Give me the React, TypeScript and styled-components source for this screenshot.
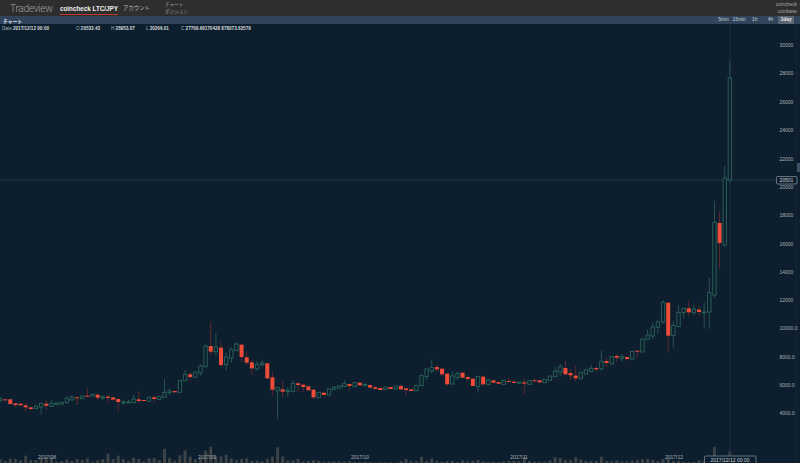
import React from 'react';
import styled, {createGlobalStyle} from 'styled-components';

type Candle = {top: number; bottom: number; high: number; low: number; up: boolean};
// [bodyTop, bodyBottom, wickTop?, wickBottom?] measured on a 3x crop
type Raw = [number, number, number?, number?];

const CANDLE_STEP = 5.14;
const BG = '#0d1f2e';
const FONT = '"Liberation Sans", "Noto Sans CJK JP", sans-serif';

// dirs: u = hollow green, d = filled red, one letter per row
const seg = (y0: number, dirs: string, rows: Raw[]): Candle[] =>
  rows.map((r, i) => ({
    top: y0 + r[0] / 3,
    bottom: y0 + r[1] / 3,
    high: y0 + (r[2] ?? r[0]) / 3,
    low: y0 + (r[3] ?? r[1]) / 3,
    up: dirs[i] === 'u',
  }));

const candles: Candle[] = [
  ...seg(380, 'uddddddu' + 'uduuuuud' + 'udududdd' + 'uuuddudu', [
    [55, 62, 50, 67], [58, 61], [58, 72], [70, 75, 70, 82], [71, 76], [76, 82, 68, 95], [82, 87, 82, 92], [80, 86, 72, 88],
    [70, 81, 70, 104], [71, 77, 60, 90], [70, 79, 60, 82], [69, 74], [67, 72], [56, 68, 48, 72], [51, 60, 45, 62], [52, 55, 52, 75],
    [48, 56], [47, 50, 25, 52], [43, 48], [44, 53, 44, 60], [51, 54, 45, 60], [50, 54, 45, 68], [52, 59, 52, 62], [57, 66, 57, 95],
    [66, 69, 60, 74], [66, 68, 60, 70], [57, 68, 45, 70], [58, 63, 35, 70], [60, 63], [52, 64], [52, 57, 45, 66], [49, 58],
  ]),
  ...seg(310, 'uuduuduu' + 'ududuuud' + 'dduuddud' + 'uudddduduu', [
    [247, 262, 207, 264], [243, 247, 235, 255], [243, 247], [211, 247, 210, 248], [193, 212, 180, 213], [193, 201, 185, 212], [186, 202], [168, 189, 163, 197],
    [108, 170, 104, 171], [108, 125, 36, 135], [111, 125, 70, 135], [113, 165, 97, 170], [141, 164, 127, 182], [119, 144, 112, 158], [102, 122, 96, 123], [104, 141, 104, 156],
    [142, 158, 124, 165], [157, 175, 148, 195], [163, 177, 153, 182], [159, 164, 148, 170], [160, 205, 160, 207], [202, 239, 186, 255], [232, 242, 232, 327], [238, 245, 212, 262],
    [241, 245, 233, 260], [220, 245, 212, 247], [220, 225, 215, 245], [224, 231, 222, 245], [229, 241], [239, 262, 239, 268], [247, 263], [248, 255], [237, 255], [232, 239, 228, 240],
  ]),
  ...seg(350, 'uudududd' + 'dududddu' + 'uuudddu' + 'u' + 'dddududd' + 'uddududd' + 'uuuudddu' + 'uudud', [
    [107, 114], [101, 110, 90, 111], [102, 108, 102, 122], [98, 110], [98, 106], [103, 107, 100, 108], [105, 113], [112, 117, 108, 117],
    [114, 120], [111, 119], [111, 117], [108, 117], [108, 118, 103, 120], [115, 120, 115, 137], [118, 123], [106, 122],
    [77, 107, 70, 108], [57, 80, 57, 90], [52, 63, 28, 70], [51, 58, 45, 65], [56, 73, 56, 78], [71, 103, 71, 108], [78, 102, 63, 102], [71, 82, 65, 90],
    [68, 83], [81, 87, 77, 94], [86, 108], [79, 110, 79, 128], [80, 103, 78, 108], [90, 104, 85, 105], [91, 98], [96, 101],
    [92, 103, 88, 104], [93, 96, 83, 97], [95, 99], [96, 100], [97, 101, 87, 133], [92, 103, 92, 106], [91, 94, 85, 94], [91, 97],
    [88, 98], [78, 91], [63, 80, 50, 81], [50, 66, 42, 80], [54, 73, 32, 75], [69, 76, 60, 90], [77, 85, 48, 95], [67, 85, 67, 90],
    [59, 72], [55, 65, 45, 66], [54, 58, 48, 65], [34, 56, 2, 63], [33, 39, 25, 52],
  ]),
  ...seg(280, 'udududuu' + 'uuuduuud' + 'uduu', [
    [230, 252], [228, 233, 222, 245], [230, 235, 222, 245], [231, 237, 231, 243], [214, 237], [212, 215, 212, 233], [177, 216], [165, 178, 148, 179],
    [141, 168, 127, 177], [126, 142, 118, 162], [68, 126, 60, 132], [68, 167, 68, 218], [137, 167, 122, 202], [97, 140, 77, 141], [85, 98, 85, 115], [85, 97, 63, 107],
    [87, 98, 75, 105], [89, 96, 77, 106], [96, 98, 67, 142], [38, 96, -6, 147],
  ]),
  {top: 222.3, bottom: 295, high: 201, low: 298, up: true},
  {top: 223, bottom: 243, high: 211.7, low: 269, up: false},
  {top: 178, bottom: 245, high: 166, low: 247, up: true},
  {top: 78, bottom: 180, high: 61, low: 183, up: true},
];

const volumes: number[] = [
  ...[238, 243, 236, 237, 241, 227, 240, 240, 235, 230, 233, 245, 243, 239, 243, 237, 240, 235, 245, 241, 237, 221, 237, 227, 237, 243, 233, 237, 244, 235, 234, 240, 207, 234, 242, 226, 211, 230, 238].map(t => (249 - t) / 3),
  ...[70, 47, 35, 65, 64, 59, 70, 75, 72, 70, 77, 77, 79, 71, 65, 37, 64, 77, 76, 72, 79, 78, 76, 78, 80, 79, 79, 79, 79].map(t => (84 - t) / 3),
  ...[333, 336, 336, 336, 337, 337, 336, 337, 337, 338, 333, 327, 334, 333, 320, 333, 325, 333, 335, 333, 333, 336, 331, 334, 333, 330, 334, 336, 335, 336, 334, 332, 333, 333, 322, 333, 335, 335, 335, 331, 322, 324, 330, 330, 322, 328, 333, 332, 333, 320, 333].map(t => (339 - t) / 3),
  ...[184, 181, 184, 184, 182, 180, 178, 177, 180, 183, 177, 176, 183, 183, 186, 186, 186, 181].map(t => (189 - t) / 3),
  2, 2, 16, 3, 3, 11.7,
];

const priceLabels: [string, number][] = [
  ['30000', 45], ['28000', 73.5], ['26000', 102], ['24000', 130.5], ['22000', 159], ['20000', 187], ['18000', 215.5],
  ['16000', 244], ['14000', 272], ['12000', 300.5], ['10000.0', 328.5], ['8000.0', 357], ['6000.0', 385.5], ['4000.0', 413.5],
];
const dateLabels: [string, number][] = [
  ['2017/08', 47], ['2017/09', 207], ['2017/10', 360], ['2017/11', 519], ['2017/12', 674],
];
const tabs = ['5min', '15min', '1h', '4h', '1day'];

const GlobalStyle = createGlobalStyle`
  html, body { margin: 0; padding: 0; background: ${BG}; }
  body { font-family: ${FONT}; overflow: hidden; }
`;

export default function App() {
  return (
    <Page>
      <GlobalStyle />
      <Header>
        <Logo>Tradeview</Logo>
        <NavActive>coincheck LTC/JPY</NavActive>
        <NavItem>アカウント</NavItem>
        <SubNav>
          <span>チャート</span>
          <span>ポジション</span>
        </SubNav>
        <Exchanges>
          <span>coincheck</span>
          <span>coinbase</span>
        </Exchanges>
      </Header>
      <Toolbar>
        <ToolbarTitle>チャート</ToolbarTitle>
        <Tabs>
          {tabs.map(t => (
            <Tab key={t} $active={t === '1day'}>
              {t}
            </Tab>
          ))}
        </Tabs>
      </Toolbar>
      <ChartArea>
        <Legend>
          <LegendDate>
            Date <b>2017/12/12 00:00</b>
          </LegendDate>
          <LegendValue $w={35}>
            O <b>20533.43</b>
          </LegendValue>
          <LegendValue $w={35}>
            H <b>28953.07</b>
          </LegendValue>
          <LegendValue $w={35}>
            L <b>20266.01</b>
          </LegendValue>
          <LegendValue $w={120}>
            C <b>27709.66170428 878073.63579</b>
          </LegendValue>
        </Legend>
        <Chart viewBox="0 24 800 439" width={800} height={439}>
          {volumes.map((h, i) => (
            <rect key={i} x={i * CANDLE_STEP - 1.5} y={463 - h} width={3} height={h} fill="#3c4245" />
          ))}
          <line x1={730} y1={24} x2={730} y2={456} stroke="#1d3140" />
          <line x1={0} y1={180} x2={776} y2={180} stroke="#1f3a42" />
          <line x1={796.5} y1={24} x2={796.5} y2={463} stroke="#12242f" />
          <rect x={797} y={163} width={3} height={9} fill="#3d5066" />
          {candles.map((c, i) => {
            const x = i * CANDLE_STEP;
            return (
              <g key={i}>
                <line x1={x} y1={c.high} x2={x} y2={c.low} stroke={c.up ? '#27544f' : '#5e2a2e'} />
                {c.up ? (
                  <rect x={x - 1.7} y={c.top} width={3.4} height={Math.max(c.bottom - c.top, 0.8)} fill={BG} stroke="#2a6459" strokeWidth={0.9} />
                ) : (
                  <rect x={x - 2} y={c.top} width={4} height={Math.max(c.bottom - c.top, 1)} fill="#ee4b38" />
                )}
              </g>
            );
          })}
          {priceLabels.map(([t, y]) => (
            <AxisText key={t} x={779.5} y={y + 1.8}>
              {t}
            </AxisText>
          ))}
          {dateLabels.map(([t, x]) => (
            <AxisText key={t} x={x} y={459} textAnchor="middle">
              {t}
            </AxisText>
          ))}
          <rect x={776.5} y={176.5} width={20.5} height={7.5} rx={1} fill={BG} stroke="#8b959c" strokeWidth={0.7} />
          <TagText x={779.5} y={182.2}>20501</TagText>
          <rect x={704.5} y={456} width={51.5} height={8} rx={1} fill={BG} stroke="#8b959c" strokeWidth={0.7} />
          <TagText x={730} y={461.5} textAnchor="middle">
            2017/12/12 00:00
          </TagText>
        </Chart>
      </ChartArea>
    </Page>
  );
}

const Page = styled.div`
  display: flex;
  flex-direction: column;
  width: 800px;
  height: 463px;
  overflow: hidden;
  background: ${BG};
`;

const Header = styled.header`
  display: flex;
  align-items: center;
  flex: 0 0 16px;
  padding: 0 3px 0 10px;
  background: #2e2e2e;
  color: #b5b5b5;
`;

const Logo = styled.div`
  width: 50px;
  font-family: Roboto, ${FONT};
  font-size: 10.2px;
  font-weight: 300;
  letter-spacing: -0.3px;
  color: #a0a0a0;
`;

const NavActive = styled.div`
  padding-bottom: 1px;
  margin-top: 2px;
  border-bottom: 1px solid #c0392b;
  font-size: 6.3px;
  font-weight: 700;
  line-height: 9px;
  color: #f2f2f2;
  white-space: nowrap;
`;

const NavItem = styled.div`
  margin-left: 5px;
  font-size: 5.4px;
  color: #b9b9b9;
  white-space: nowrap;
`;

const SubNav = styled.div`
  display: flex;
  flex-direction: column;
  gap: 2px;
  margin-left: 15px;
  font-size: 4.6px;
  line-height: 5px;
  color: #a5a5a5;
`;

const Exchanges = styled.div`
  display: flex;
  flex-direction: column;
  align-items: flex-end;
  gap: 2.5px;
  margin-left: auto;
  font-size: 4.8px;
  line-height: 5px;
  color: #a8a8a8;
`;

const Toolbar = styled.div`
  display: flex;
  align-items: center;
  justify-content: space-between;
  flex: 0 0 8px;
  padding: 0 6px 0 3px;
  background: #31445b;
`;

const ToolbarTitle = styled.div`
  font-size: 4.8px;
  font-weight: 700;
  color: #dfe4ea;
`;

const Tabs = styled.div`
  display: flex;
`;

const Tab = styled.div<{$active?: boolean}>`
  width: 15.7px;
  height: 8px;
  font-size: 4.8px;
  font-weight: ${p => (p.$active ? 700 : 400)};
  line-height: 8px;
  text-align: center;
  color: ${p => (p.$active ? '#e8e8e8' : '#c9d0d8')};
  background: ${p => (p.$active ? '#5a6672' : 'transparent')};
`;

const ChartArea = styled.main`
  position: relative;
  flex: 1;
`;

const Chart = styled.svg`
  display: block;
`;

const Legend = styled.div`
  position: absolute;
  top: 2px;
  left: 2px;
  display: flex;
  font-size: 4.6px;
  line-height: 6px;
  color: #aab2b8;
  white-space: nowrap;

  b {
    font-weight: 700;
    color: #d5d9dc;
  }
`;

const LegendDate = styled.span`
  width: 74px;
`;

const LegendValue = styled.span<{$w: number}>`
  width: ${p => p.$w}px;
`;

const AxisText = styled.text`
  font-family: ${FONT};
  font-size: 5px;
  fill: #a9b0b5;
`;

const TagText = styled.text`
  font-family: ${FONT};
  font-size: 5px;
  fill: #c9ced2;
`;
